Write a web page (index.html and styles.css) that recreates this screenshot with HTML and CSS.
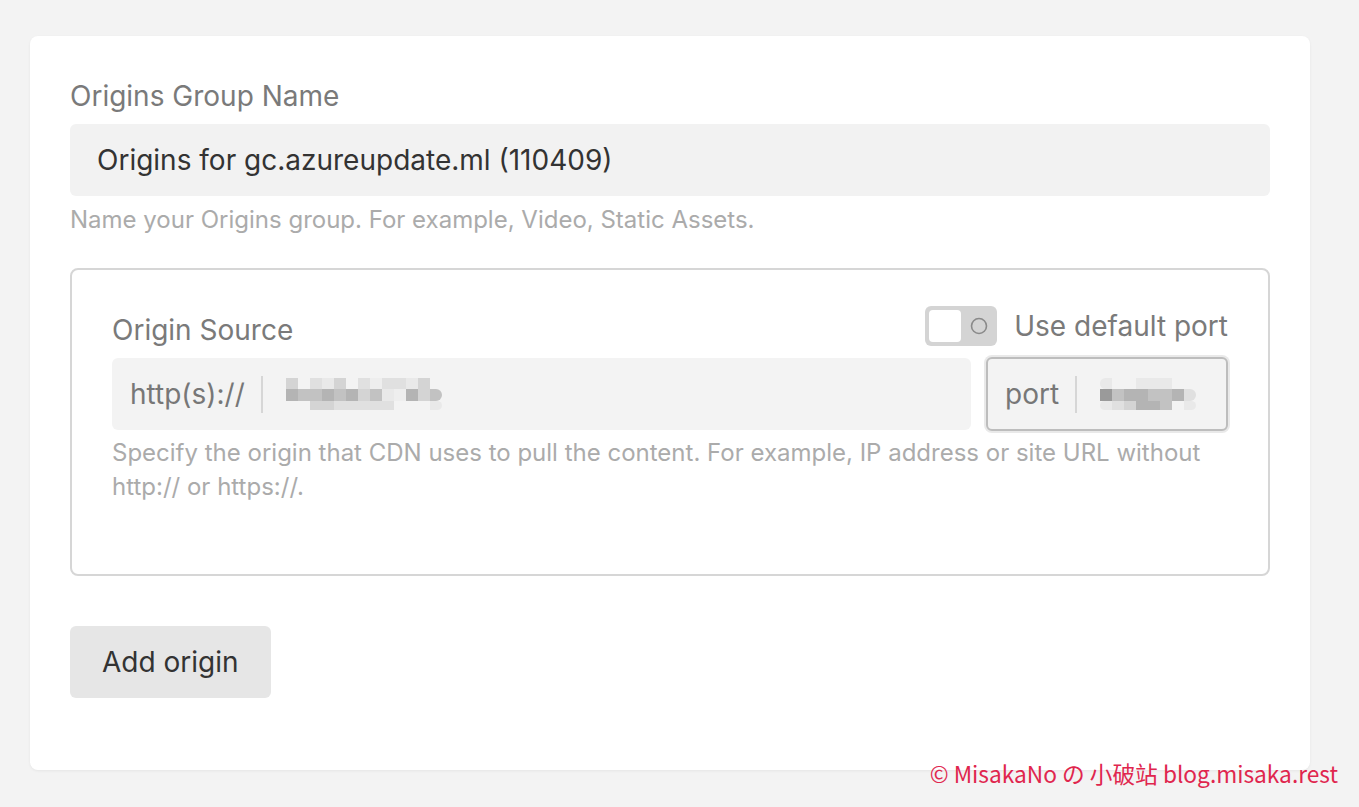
FILE: index.html
```html
<!DOCTYPE html>
<html lang="en">
<head>
<meta charset="utf-8">
<title>Origins Group</title>
<link rel="stylesheet" href="styles.css">
</head>
<body>
<main class="card">
  <div class="label">Origins Group Name</div>
  <div class="text-input"><span class="value">Origins for gc.azureupdate.ml (110409)</span></div>
  <div class="help">Name your Origins group. For example, Video, Static Assets.</div>

  <section class="origin-box">
    <div class="origin-head">
      <div class="label origin-label">Origin Source</div>
      <div class="toggle-wrap">
        <span class="toggle">
          <span class="knob"></span>
          <svg class="off-ring" width="20" height="20" viewBox="0 0 20 20"><circle cx="10" cy="10" r="7.5" fill="none" stroke="#8a8a8a" stroke-width="1.6"/></svg>
        </span>
        <span class="toggle-text">Use default port</span>
      </div>
    </div>
    <div class="origin-inputs">
      <div class="addon-input host">
        <span class="prefix">http(s)://</span>
        <span class="sep"></span>
        <span class="pix pix-host">
          <span class="prow"><i class="c4"></i><i class="c0"></i><i class="c5"></i><i class="c6"></i><i class="c4"></i><i class="c0"></i><i class="c5"></i><i class="c7"></i><i class="c5"></i><i class="c5"></i><i class="c6"></i><i class="c4"></i><i class="c0"></i></span>
          <span class="prow"><i class="c2"></i><i class="c3"></i><i class="c3"></i><i class="c2"></i><i class="c3"></i><i class="c2"></i><i class="c4"></i><i class="c3"></i><i class="c6"></i><i class="c7"></i><i class="c2"></i><i class="c4"></i><i class="c3 rr"></i></span>
          <span class="prow"><i class="c0"></i><i class="c0"></i><i class="c4"></i><i class="c4"></i><i class="c5"></i><i class="c5"></i><i class="c5"></i><i class="c5"></i><i class="c5"></i><i class="c0"></i><i class="c0"></i><i class="c0"></i><i class="c6 rr"></i></span>
        </span>
      </div>
      <div class="addon-input port">
        <span class="prefix">port</span>
        <span class="sep"></span>
        <span class="pix pix-port">
          <span class="prow"><i class="c6 rl"></i><i class="c0"></i><i class="c0"></i><i class="c6"></i><i class="c6"></i><i class="c6"></i><i class="c0"></i><i class="c0"></i></span>
          <span class="prow"><i class="c1"></i><i class="c3"></i><i class="c2"></i><i class="c2"></i><i class="c3"></i><i class="c3"></i><i class="c2"></i><i class="c5 rr"></i></span>
          <span class="prow"><i class="c6 rl"></i><i class="c5"></i><i class="c4"></i><i class="c2"></i><i class="c2"></i><i class="c3"></i><i class="c0"></i><i class="c6 rr"></i></span>
        </span>
      </div>
    </div>
    <div class="help help-wide">Specify the origin that CDN uses to pull the content. For example, IP address or site URL without http:// or https://.</div>
  </section>

  <button class="btn" type="button">Add origin</button>
</main>
<div class="watermark">© MisakaNo の 小破站 blog.misaka.rest</div>
</body>
</html>
```
FILE: styles.css
```css
* { box-sizing: border-box; }

html, body {
  margin: 0;
  padding: 0;
  background: #f3f3f3;
  font-family: Inter, "Noto Sans", "Liberation Sans", sans-serif;
}

body {
  padding: 36px 49px 0 30px;
  min-height: 807px;
  position: relative;
}

.card {
  width: 1280px;
  background: #fff;
  border-radius: 8px;
  box-shadow: 0 1px 3px rgba(0, 0, 0, 0.06);
  padding: 40px 40px 72px 40px;
}

.label {
  font-size: 28px;
  line-height: 40px;
  color: #7a7a7a;
}

.text-input {
  margin-top: 8px;
  height: 72px;
  background: #f2f2f2;
  border-radius: 6px;
  padding: 0 27px;
  display: flex;
  align-items: center;
}

.text-input .value {
  font-size: 28px;
  color: #333;
}

.help {
  margin-top: 8px;
  font-size: 24px;
  line-height: 32px;
  color: #ababab;
}

.origin-box {
  margin-top: 32px;
  border: 2px solid #d6d6d6;
  border-radius: 8px;
  padding: 36px 40px 70px 40px;
}

.origin-head {
  display: flex;
  justify-content: space-between;
  align-items: flex-start;
  height: 44px;
}

.origin-label {
  margin-top: 4px;
}

.toggle-wrap {
  display: flex;
  align-items: center;
  gap: 17px;
  height: 40px;
}

.toggle {
  width: 72px;
  height: 40px;
  background: #d4d4d4;
  border-radius: 6px;
  display: flex;
  align-items: center;
  padding: 0 4px;
  justify-content: space-between;
}

.knob {
  width: 32px;
  height: 32px;
  background: #fff;
  border-radius: 4px;
}

.off-ring {
  margin-right: 4px;
}

.toggle-text {
  font-size: 28px;
  color: #7a7a7a;
}

.origin-inputs {
  margin-top: 7px;
  display: flex;
  gap: 15px;
  align-items: center;
}

.addon-input {
  height: 72px;
  background: #f3f3f3;
  border-radius: 6px;
  display: flex;
  align-items: center;
}

.addon-input.host {
  flex: 1;
  padding-left: 18px;
}

.addon-input.port {
  width: 242px;
  height: 74px;
  border: 2px solid #bdbdbd;
  box-shadow: 0 0 0 2px #e9e9e9;
  padding-left: 17px;
}

.prefix {
  font-size: 28px;
  color: #777;
}

.sep {
  width: 2px;
  height: 37px;
  background: #d6d6d6;
  margin: 0 23px 0 16px;
}

.pix {
  display: flex;
  flex-direction: column;
}

.prow {
  display: flex;
  height: 11px;
}

.prow:nth-child(2) { height: 12px; }
.prow:nth-child(3) { height: 9px; }

.prow i {
  display: block;
  width: 12px;
  height: 100%;
}

.rr { border-radius: 0 6px 6px 0; }
.rl { border-radius: 6px 0 0 6px; }

.c0 { background: #f3f3f3; }
.c1 { background: #9a9a9a; }
.c2 { background: #b4b4b4; }
.c3 { background: #c2c2c2; }
.c4 { background: #d4d4d4; }
.c5 { background: #e0e0e0; }
.c6 { background: #e9e9e9; }
.c7 { background: #eeeeee; }

.help-wide {
  margin-top: 5px;
  line-height: 34px;
}

.btn {
  margin-top: 50px;
  height: 72px;
  padding: 0 32px;
  background: #e6e6e6;
  border: none;
  border-radius: 6px;
  font-family: Inter, "Noto Sans", "Liberation Sans", sans-serif;
  font-size: 28px;
  color: #333;
}

.watermark {
  position: absolute;
  right: 21px;
  top: 759px;
  font-family: "Noto Sans CJK SC", "Noto Sans", sans-serif;
  font-size: 22.7px;
  line-height: 30px;
  color: #e0264e;
}
```
